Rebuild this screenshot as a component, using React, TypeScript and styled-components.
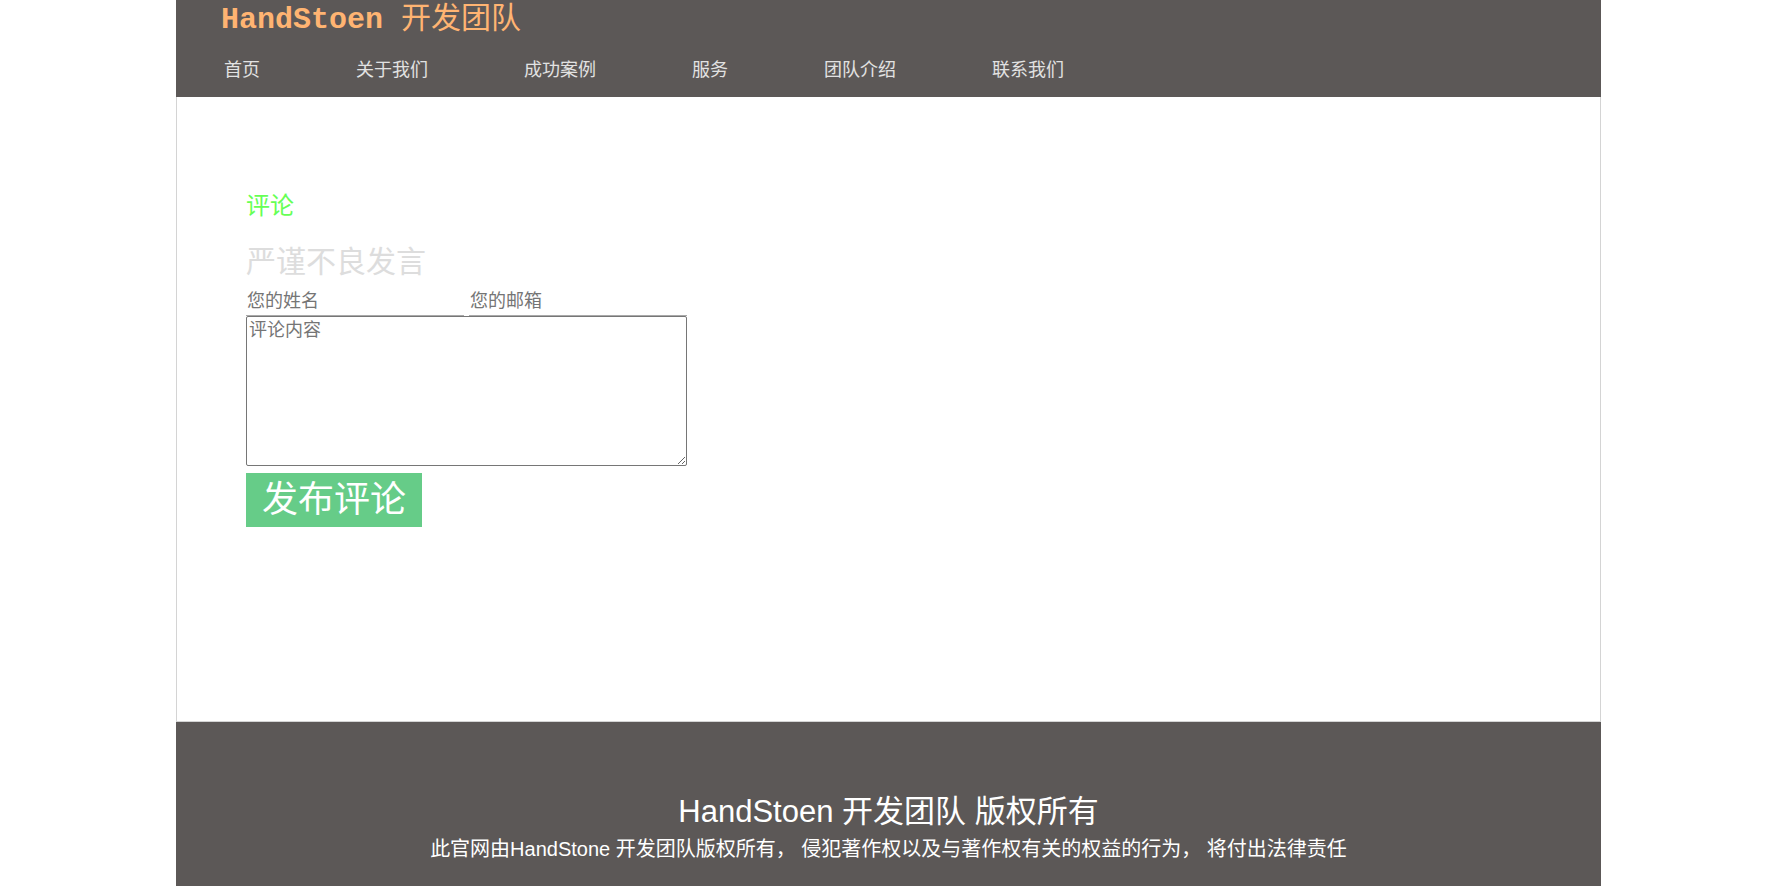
import React from "react";
import styled, { createGlobalStyle } from "styled-components";

const SANS = `"Liberation Sans", "Noto Sans CJK SC", sans-serif`;

const GlobalStyle = createGlobalStyle`
  html, body {
    margin: 0;
    padding: 0;
    background: #ffffff;
  }
  body {
    font-family: ${SANS};
  }
  * { box-sizing: border-box; }
`;

const Page = styled.div`
  width: 1425px;
  margin: 0 0 0 176px;
  display: flex;
  flex-direction: column;
`;

const Header = styled.header`
  height: 97px;
  background: #5c5857;
  display: flex;
  flex-direction: column;
`;

const Logo = styled.h1`
  margin: 0 0 0 45px;
  height: 33px;
  line-height: 30px;
  font-size: 30px;
  font-weight: normal;
  color: #ffb472;
  white-space: pre;
`;

const LogoLatin = styled.span`
  font-family: "Liberation Mono", monospace;
  font-weight: bold;
`;

const LogoCjk = styled.span`
  font-family: "Noto Sans CJK SC", sans-serif;
`;

const Nav = styled.ul`
  list-style: none;
  margin: 23px 0 0 0;
  padding: 0;
  display: flex;
`;

const NavItem = styled.li`
  padding: 0 48px;
  font-size: 18px;
  line-height: 28px;
  color: #e2e2e2;
  font-family: ${SANS};
`;

const Main = styled.main`
  height: 625px;
  border: 1px solid #d4d4d4;
  border-top: none;
  padding: 93px 69px 0;
  display: flex;
  flex-direction: column;
  align-items: flex-start;
`;

const Title = styled.h2`
  margin: 0;
  font-size: 24px;
  line-height: 32px;
  font-weight: normal;
  color: #66ff55;
`;

const Subtitle = styled.h3`
  margin: 22px 0 0;
  font-size: 30px;
  line-height: 36px;
  font-weight: normal;
  color: #dddddd;
`;

const Form = styled.form`
  margin-top: 7px;
  display: flex;
  flex-direction: column;
  align-items: flex-start;
`;

const FieldRow = styled.div`
  display: flex;
  gap: 5px;
`;

const TextInput = styled.input`
  width: 218px;
  height: 29px;
  border: none;
  border-bottom: 1px solid #a9a9a9;
  padding: 0 1px;
  font-family: ${SANS};
  font-size: 18px;
  color: #333;
  outline: none;
  background: transparent;
  &::placeholder {
    color: #757575;
  }
`;

const TextArea = styled.textarea`
  width: 441px;
  height: 150px;
  border: 1px solid #767676;
  border-radius: 2px;
  padding: 1px 2px;
  font-family: ${SANS};
  font-size: 18px;
  line-height: 24px;
  color: #333;
  &::placeholder {
    color: #757575;
  }
`;

const SubmitButton = styled.button`
  margin-top: 7px;
  width: 176px;
  height: 54px;
  border: none;
  background: #66cc88;
  color: #ffffff;
  font-family: "Noto Sans CJK SC", sans-serif;
  font-size: 36px;
  line-height: 44px;
  padding: 0 0 8px;
  cursor: pointer;
`;

const Footer = styled.footer`
  background: #5c5857;
  padding: 72px 0 40px;
  display: flex;
  flex-direction: column;
  align-items: center;
  color: #ffffff;
`;

const FooterTitle = styled.div`
  font-size: 31px;
  line-height: 36px;
`;

const FooterText = styled.div`
  font-size: 20px;
  line-height: 38px;
  white-space: pre;
`;

const navItems = ["首页", "关于我们", "成功案例", "服务", "团队介绍", "联系我们"];

export default function App() {
  return (
    <>
      <GlobalStyle />
      <Page>
        <Header>
          <Logo>
            <LogoLatin>HandStoen </LogoLatin>
            <LogoCjk>开发团队</LogoCjk>
          </Logo>
          <Nav>
            {navItems.map((n) => (
              <NavItem key={n}>{n}</NavItem>
            ))}
          </Nav>
        </Header>
        <Main>
          <Title>评论</Title>
          <Subtitle>严谨不良发言</Subtitle>
          <Form onSubmit={(e) => e.preventDefault()}>
            <FieldRow>
              <TextInput placeholder="您的姓名" />
              <TextInput placeholder="您的邮箱" />
            </FieldRow>
            <TextArea placeholder="评论内容" />
            <SubmitButton type="submit">发布评论</SubmitButton>
          </Form>
        </Main>
        <Footer>
          <FooterTitle>HandStoen 开发团队 版权所有</FooterTitle>
          <FooterText>此官网由HandStone 开发团队版权所有， 侵犯著作权以及与著作权有关的权益的行为， 将付出法律责任</FooterText>
        </Footer>
      </Page>
    </>
  );
}
